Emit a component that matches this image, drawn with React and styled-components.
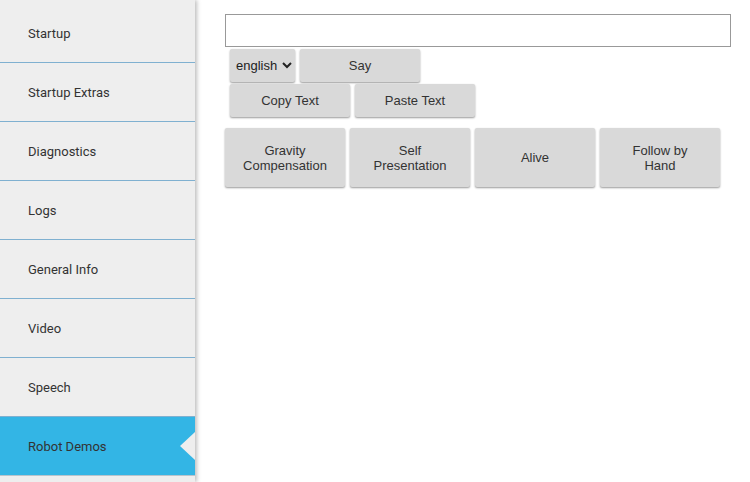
import React from "react";
import styled, { createGlobalStyle } from "styled-components";

const Global = createGlobalStyle`
  html, body { margin: 0; padding: 0; background: #fff; height: 100%; overflow: hidden; }
  #root { height: 100%; }
`;

const Page = styled.div`
  display: flex;
  height: 482px;
  overflow: hidden;
  font-family: "Liberation Sans", Arial, sans-serif;
`;

const Sidebar = styled.nav`
  width: 195px;
  flex: none;
  background: #eeeeee;
  box-shadow: 2px 0 4px rgba(0,0,0,0.25);
  padding-top: 4px;
  overflow: hidden;
  position: relative;
  z-index: 1;
`;

const Item = styled.div`
  position: relative;
  height: 58px;
  display: flex;
  align-items: center;
  padding-left: 28px;
  font-family: Roboto, sans-serif;
  font-size: 13px;
  color: #333;
  border-bottom: 1px solid ${p => (p.$active ? "#b8c4cc" : "#7fb0d0")};
  background: ${p => (p.$active ? "#33b5e5" : "transparent")};
`;

const Pointer = styled.span`
  position: absolute;
  right: 0;
  top: 15px;
  width: 0;
  height: 0;
  border-top: 14px solid transparent;
  border-bottom: 14px solid transparent;
  border-right: 15px solid #eeeeee;
`;

const Main = styled.main`
  flex: 1;
  padding: 14px 19px 0 30px;
  display: flex;
  flex-direction: column;
`;

const TextInput = styled.input`
  box-sizing: border-box;
  width: 506px;
  height: 33px;
  border: 1px solid #999;
  margin: 0;
`;

const Row = styled.div`
  display: flex;
  gap: 5px;
  padding-left: ${p => p.$inset || 0}px;
  margin-top: ${p => p.$mt || 0}px;
`;

const Button = styled.button`
  box-sizing: border-box;
  width: ${p => p.$w || 120}px;
  height: ${p => p.$h || 33}px;
  margin: 0;
  border: none;
  border-radius: 2px;
  background: #d9d9d9;
  box-shadow: 0 1px 2px rgba(0,0,0,0.4);
  font-family: "Liberation Sans", Arial, sans-serif;
  font-size: 13px;
  color: #333;
  line-height: 15px;
  padding: 0 4px;
`;

const Select = styled.select`
  box-sizing: border-box;
  width: 65px;
  height: 33px;
  margin: 0;
  border: none;
  border-radius: 2px;
  background: #d9d9d9;
  box-shadow: 0 1px 2px rgba(0,0,0,0.4);
  font-family: "Liberation Sans", Arial, sans-serif;
  font-size: 13px;
  color: #222;
  padding: 0 2px;
`;

const items = ["Startup", "Startup Extras", "Diagnostics", "Logs", "General Info", "Video", "Speech", "Robot Demos", ""];

export default function App() {
  return (
    <>
      <Global />
      <Page>
        <Sidebar>
          {items.map((t, i) => (
            <Item key={i} $active={t === "Robot Demos"}>
              {t}
              {t === "Robot Demos" && <Pointer />}
            </Item>
          ))}
        </Sidebar>
        <Main>
          <TextInput />
          <Row $inset={5} $mt={2}>
            <Select defaultValue="english"><option>english</option></Select>
            <Button>Say</Button>
          </Row>
          <Row $inset={5} $mt={2}>
            <Button>Copy Text</Button>
            <Button>Paste Text</Button>
          </Row>
          <Row $mt={11}>
            <Button $h={59}>Gravity<br />Compensation</Button>
            <Button $h={59}>Self<br />Presentation</Button>
            <Button $h={59}>Alive</Button>
            <Button $h={59}>Follow by<br />Hand</Button>
          </Row>
        </Main>
      </Page>
    </>
  );
}
